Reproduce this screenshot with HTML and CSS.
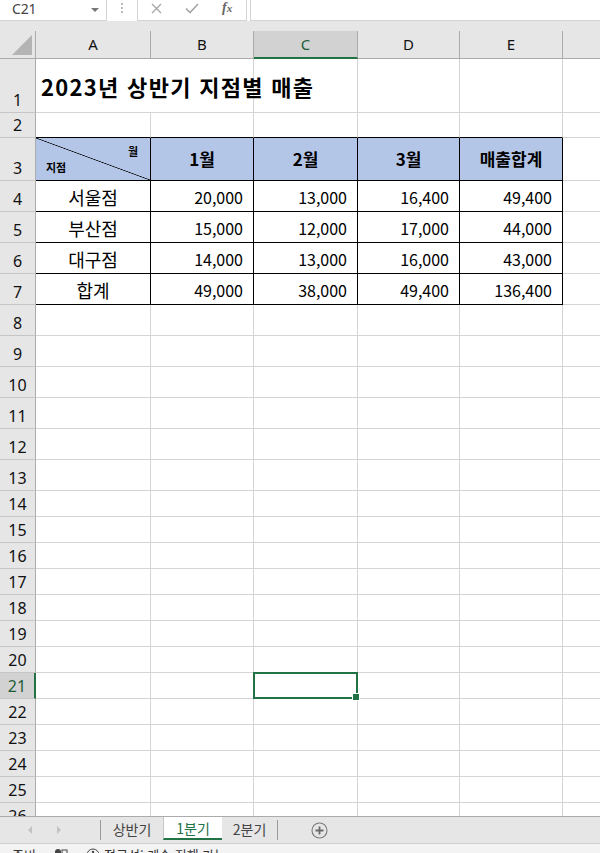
FILE: index.html
```html
<!DOCTYPE html>
<html lang="ko">
<head>
<meta charset="utf-8">
<title>2023년 상반기 지점별 매출</title>
<link rel="stylesheet" href="styles.css">
</head>
<body>
<div class="app">
  <div class="fbar">
    <div class="namebox"><span class="nb-text">C21</span><span class="dd"></span></div>
    <div class="vdots"><i></i><i></i><i></i></div>
    <div class="fbtns">
      <svg class="ico-x" width="11" height="11" viewBox="0 0 11 11"><path d="M1 1L10 10M10 1L1 10" stroke="#a6a6a6" stroke-width="1.3" fill="none"/></svg>
      <svg class="ico-ok" width="14" height="11" viewBox="0 0 14 11"><path d="M1 5.5L5 9.5L13 1" stroke="#a6a6a6" stroke-width="1.6" fill="none"/></svg>
      <span class="fx">f<span class="fx-x">x</span></span>
    </div>
    <div class="finput"></div>
  </div>
  <div class="band"></div>
  <div class="sheet">
    <div class="grid">
      <div class="corner"><span class="tri"></span></div>
      <div class="ch">A</div><div class="ch">B</div><div class="ch sel">C</div><div class="ch">D</div><div class="ch">E</div><div class="ch last"></div>

      <div class="rh">1</div>
      <div class="c title-cell"><span class="title">2023년 상반기 지점별 매출</span></div><div class="c"></div><div class="c"></div><div class="c"></div><div class="c"></div><div class="c last"></div>

      <div class="rh">2</div>
      <div class="c tt"></div><div class="c tt"></div><div class="c tt"></div><div class="c tt"></div><div class="c tt"></div><div class="c last"></div>

      <div class="rh">3</div>
      <div class="c t hd diag"><span class="d-mon">월</span><span class="d-br">지점</span></div>
      <div class="c t hd">1월</div><div class="c t hd">2월</div><div class="c t hd">3월</div><div class="c t hd">매출합계</div><div class="c last"></div>

      <div class="rh">4</div>
      <div class="c t nm">서울점</div><div class="c t num">20,000</div><div class="c t num">13,000</div><div class="c t num">16,400</div><div class="c t num">49,400</div><div class="c last"></div>

      <div class="rh">5</div>
      <div class="c t nm">부산점</div><div class="c t num">15,000</div><div class="c t num">12,000</div><div class="c t num">17,000</div><div class="c t num">44,000</div><div class="c last"></div>

      <div class="rh">6</div>
      <div class="c t nm">대구점</div><div class="c t num">14,000</div><div class="c t num">13,000</div><div class="c t num">16,000</div><div class="c t num">43,000</div><div class="c last"></div>

      <div class="rh">7</div>
      <div class="c t nm">합계</div><div class="c t num">49,000</div><div class="c t num">38,000</div><div class="c t num">49,400</div><div class="c t num">136,400</div><div class="c last"></div>

      <div class="rh">8</div><div class="c"></div><div class="c"></div><div class="c"></div><div class="c"></div><div class="c"></div><div class="c last"></div>
      <div class="rh">9</div><div class="c"></div><div class="c"></div><div class="c"></div><div class="c"></div><div class="c"></div><div class="c last"></div>
      <div class="rh">10</div><div class="c"></div><div class="c"></div><div class="c"></div><div class="c"></div><div class="c"></div><div class="c last"></div>
      <div class="rh">11</div><div class="c"></div><div class="c"></div><div class="c"></div><div class="c"></div><div class="c"></div><div class="c last"></div>
      <div class="rh">12</div><div class="c"></div><div class="c"></div><div class="c"></div><div class="c"></div><div class="c"></div><div class="c last"></div>
      <div class="rh">13</div><div class="c"></div><div class="c"></div><div class="c"></div><div class="c"></div><div class="c"></div><div class="c last"></div>
      <div class="rh">14</div><div class="c"></div><div class="c"></div><div class="c"></div><div class="c"></div><div class="c"></div><div class="c last"></div>
      <div class="rh">15</div><div class="c"></div><div class="c"></div><div class="c"></div><div class="c"></div><div class="c"></div><div class="c last"></div>
      <div class="rh">16</div><div class="c"></div><div class="c"></div><div class="c"></div><div class="c"></div><div class="c"></div><div class="c last"></div>
      <div class="rh">17</div><div class="c"></div><div class="c"></div><div class="c"></div><div class="c"></div><div class="c"></div><div class="c last"></div>
      <div class="rh">18</div><div class="c"></div><div class="c"></div><div class="c"></div><div class="c"></div><div class="c"></div><div class="c last"></div>
      <div class="rh">19</div><div class="c"></div><div class="c"></div><div class="c"></div><div class="c"></div><div class="c"></div><div class="c last"></div>
      <div class="rh">20</div><div class="c"></div><div class="c"></div><div class="c"></div><div class="c"></div><div class="c"></div><div class="c last"></div>
      <div class="rh sel">21</div><div class="c"></div><div class="c"></div><div class="c cur"></div><div class="c"></div><div class="c"></div><div class="c last"></div>
      <div class="rh">22</div><div class="c"></div><div class="c"></div><div class="c"></div><div class="c"></div><div class="c"></div><div class="c last"></div>
      <div class="rh">23</div><div class="c"></div><div class="c"></div><div class="c"></div><div class="c"></div><div class="c"></div><div class="c last"></div>
      <div class="rh">24</div><div class="c"></div><div class="c"></div><div class="c"></div><div class="c"></div><div class="c"></div><div class="c last"></div>
      <div class="rh">25</div><div class="c"></div><div class="c"></div><div class="c"></div><div class="c"></div><div class="c"></div><div class="c last"></div>
      <div class="rh">26</div><div class="c"></div><div class="c"></div><div class="c"></div><div class="c"></div><div class="c"></div><div class="c last"></div>
    </div>
  </div>
  <div class="tabbar">
    <div class="nav"><span class="arr left"></span><span class="arr right"></span></div>
    <div class="tsep"></div>
    <div class="tab tab-a">상반기</div>
    <div class="tab tab-b tab-on">1분기</div>
    <div class="tab tab-c">2분기</div>
    <div class="tsep"></div>
    <div class="addsheet">
      <svg width="17" height="17" viewBox="0 0 17 17"><circle cx="8.5" cy="8.5" r="7.5" stroke="#7a7a7a" stroke-width="1.1" fill="none"/><path d="M8.5 4.5V12.5M4.5 8.5H12.5" stroke="#6a6a6a" stroke-width="1.8"/></svg>
    </div>
  </div>
  <div class="status">
    <span class="st-ready">준비</span>
    <svg class="st-macro" width="14" height="12" viewBox="0 0 14 12"><circle cx="4" cy="4" r="3" fill="#444"/><rect x="8" y="2" width="5" height="7" fill="none" stroke="#444"/></svg>
    <svg class="st-acc" width="14" height="14" viewBox="0 0 14 14"><circle cx="7" cy="7" r="6" fill="none" stroke="#444"/><circle cx="7" cy="4" r="1.2" fill="#444"/></svg>
    <span class="st-acc-text">접근성: 계속 진행 가능</span>
  </div>
</div>
</body>
</html>
```

FILE: styles.css
```css
* { box-sizing: border-box; margin: 0; padding: 0; }
html, body { width: 600px; height: 853px; overflow: hidden; }
body {
  font-family: "Noto Sans", "Noto Sans CJK KR", sans-serif;
  background: #fff;
  color: #000;
}
.app { display: flex; flex-direction: column; height: 853px; }

/* formula bar */
.fbar { height: 21px; display: flex; background: #fff; flex: none; }
.namebox {
  width: 107px; height: 21px;
  border-right: 1px solid #d4d4d4; border-bottom: 1px solid #d4d4d4;
  display: flex; align-items: center; justify-content: space-between;
  padding: 0 7px 3px 12px;
}
.nb-text { font-size: 14px; color: #444; line-height: 16px; letter-spacing: -0.2px; }
.dd {
  width: 0; height: 0; margin-top: 2px;
  border-left: 4px solid transparent; border-right: 4px solid transparent;
  border-top: 4px solid #777;
}
.vdots {
  width: 30px; display: flex; flex-direction: column; align-items: center;
  justify-content: flex-start; gap: 2px; padding-top: 3px;
}
.vdots i { display: block; width: 2px; height: 2px; background: #bbb; }
.fbtns {
  width: 110px; height: 21px;
  border: 1px solid #d4d4d4; border-top: none;
  display: flex; align-items: center; padding: 0 0 4px 13px;
}
.ico-x { margin-right: 23px; }
.ico-ok { margin-right: 23px; }
.fx {
  font-family: "Liberation Serif", "DejaVu Serif", serif; font-style: italic;
  font-size: 14px; color: #666; font-weight: bold; line-height: 14px;
}
.fx-x { font-size: 11px; }
.finput {
  flex: 1; margin-left: 3px; height: 21px;
  border-left: 1px solid #d4d4d4; border-bottom: 1px solid #d4d4d4;
}
.band { height: 10px; background: #e6e6e6; flex: none; }

/* sheet grid */
.sheet { height: 785px; overflow: hidden; flex: none; }
.grid {
  display: grid;
  grid-template-columns: 36px 115px 103px 104px 102px 103px 1fr;
  grid-template-rows: 28px 54px 25px 43px repeat(4, 31px) repeat(6, 31px) repeat(13, 26px);
}
.corner {
  background: #e6e6e6;
  border-right: 1px solid #ababab; border-bottom: 1px solid #ababab;
  position: relative;
}
.tri {
  position: absolute; right: 3px; bottom: 3px;
  width: 0; height: 0;
  border-left: 20px solid transparent;
  border-bottom: 20px solid #b4b4b4;
}
.ch {
  background: #e6e6e6;
  border-right: 1px solid #ababab; border-bottom: 1px solid #ababab;
  display: flex; align-items: center; justify-content: center;
  font-size: 15px; line-height: 20px; color: #111;
  padding-bottom: 1px;
}
.ch.sel { background: #d2d2d2; border-bottom: 2px solid #217346; color: #1e5c38; }
.ch.last { border-right: none; }
.rh {
  background: #e6e6e6;
  border-right: 1px solid #ababab; border-bottom: 1px solid #c6c6c6;
  display: flex; align-items: flex-end; justify-content: center;
  font-size: 16px; line-height: 20px; color: #111;
  padding-bottom: 2px;
}
.rh.sel { background: #d2d2d2; border-right: 2px solid #217346; color: #1e5c38; }
.c {
  border-right: 1px solid #d4d4d4; border-bottom: 1px solid #d4d4d4;
  font-family: "Noto Sans CJK KR", "Noto Sans", sans-serif;
  display: flex; align-items: center;
  min-width: 0; white-space: nowrap;
}
.c.last { border-right: none; }
.title-cell { overflow: visible; padding-left: 5px; border-right: none; position: relative; z-index: 1; }
.title { font-size: 22px; font-weight: 700; line-height: 26px; letter-spacing: 1.3px; }
.c.tt { border-bottom-color: #000; }
.c.t { border-right-color: #000; border-bottom-color: #000; }
.hd {
  background: #b4c6e7; justify-content: center;
  font-size: 17px; font-weight: 700; line-height: 22px;
}
.diag {
  position: relative;
  background:
    linear-gradient(to top right, transparent calc(50% - 0.7px), #000 50%, transparent calc(50% + 0.7px)),
    #b4c6e7;
}
.d-mon { position: absolute; right: 12px; top: 6px; font-size: 11px; font-weight: 700; line-height: 14px; }
.d-br { position: absolute; left: 10px; bottom: 6px; font-size: 11px; font-weight: 700; line-height: 14px; }
.nm { justify-content: center; font-size: 18px; line-height: 24px; padding-top: 1px; }
.num { justify-content: flex-end; padding-right: 10px; font-size: 16px; line-height: 22px; padding-top: 2px; }
.cur { position: relative; }
.cur::after {
  content: ""; position: absolute; left: -1px; top: -1px; right: -1px; bottom: -1px;
  border: 2px solid #217346;
}
.cur::before {
  content: ""; position: absolute; right: -4px; bottom: -4px;
  width: 6px; height: 6px; background: #217346; border: 1px solid #fff;
  z-index: 2; box-sizing: content-box; transform: translate(-1px, -1px);
}

/* tab bar */
.tabbar {
  height: 27px; flex: none; background: #e6e6e6;
  border-top: 1px solid #ababab;
  display: flex; align-items: stretch;
  font-family: "Noto Sans CJK KR", "Noto Sans", sans-serif;
}
.nav { width: 100px; display: flex; align-items: center; padding-left: 28px; gap: 25px; }
.arr { width: 0; height: 0; border-top: 4px solid transparent; border-bottom: 4px solid transparent; }
.arr.left { border-right: 4px solid #c2c2c2; }
.arr.right { border-left: 4px solid #c2c2c2; }
.tsep { width: 1px; background: #9a9a9a; margin: 3px 0 3px; flex: none; }
.tab {
  display: flex; align-items: center; justify-content: center;
  font-size: 14px; color: #444; padding-bottom: 2px; flex: none;
}
.tab-a { width: 62px; }
.tab-b { width: 59px; }
.tab-c { width: 55px; }
.tab-on {
  background: #fff; color: #217346;
  border-left: 1px solid #c6c6c6;
  border-bottom: 2px solid #217346;
  margin-bottom: 3px; padding-bottom: 0;
}
.addsheet { margin-left: 33px; display: flex; align-items: center; }

/* status bar */
.status {
  height: 22px; flex: none; background: #f3f3f3;
  border-top: 1px solid #d0d0d0;
  display: flex; align-items: flex-start; padding: 3px 0 0 12px;
  font-family: "Noto Sans CJK KR", "Noto Sans", sans-serif;
  font-size: 13px; color: #333; line-height: 16px;
}
.st-ready { width: 42px; }
.st-macro { margin-top: 1px; margin-right: 18px; }
.st-acc { margin-top: 1px; margin-right: 4px; }
```
